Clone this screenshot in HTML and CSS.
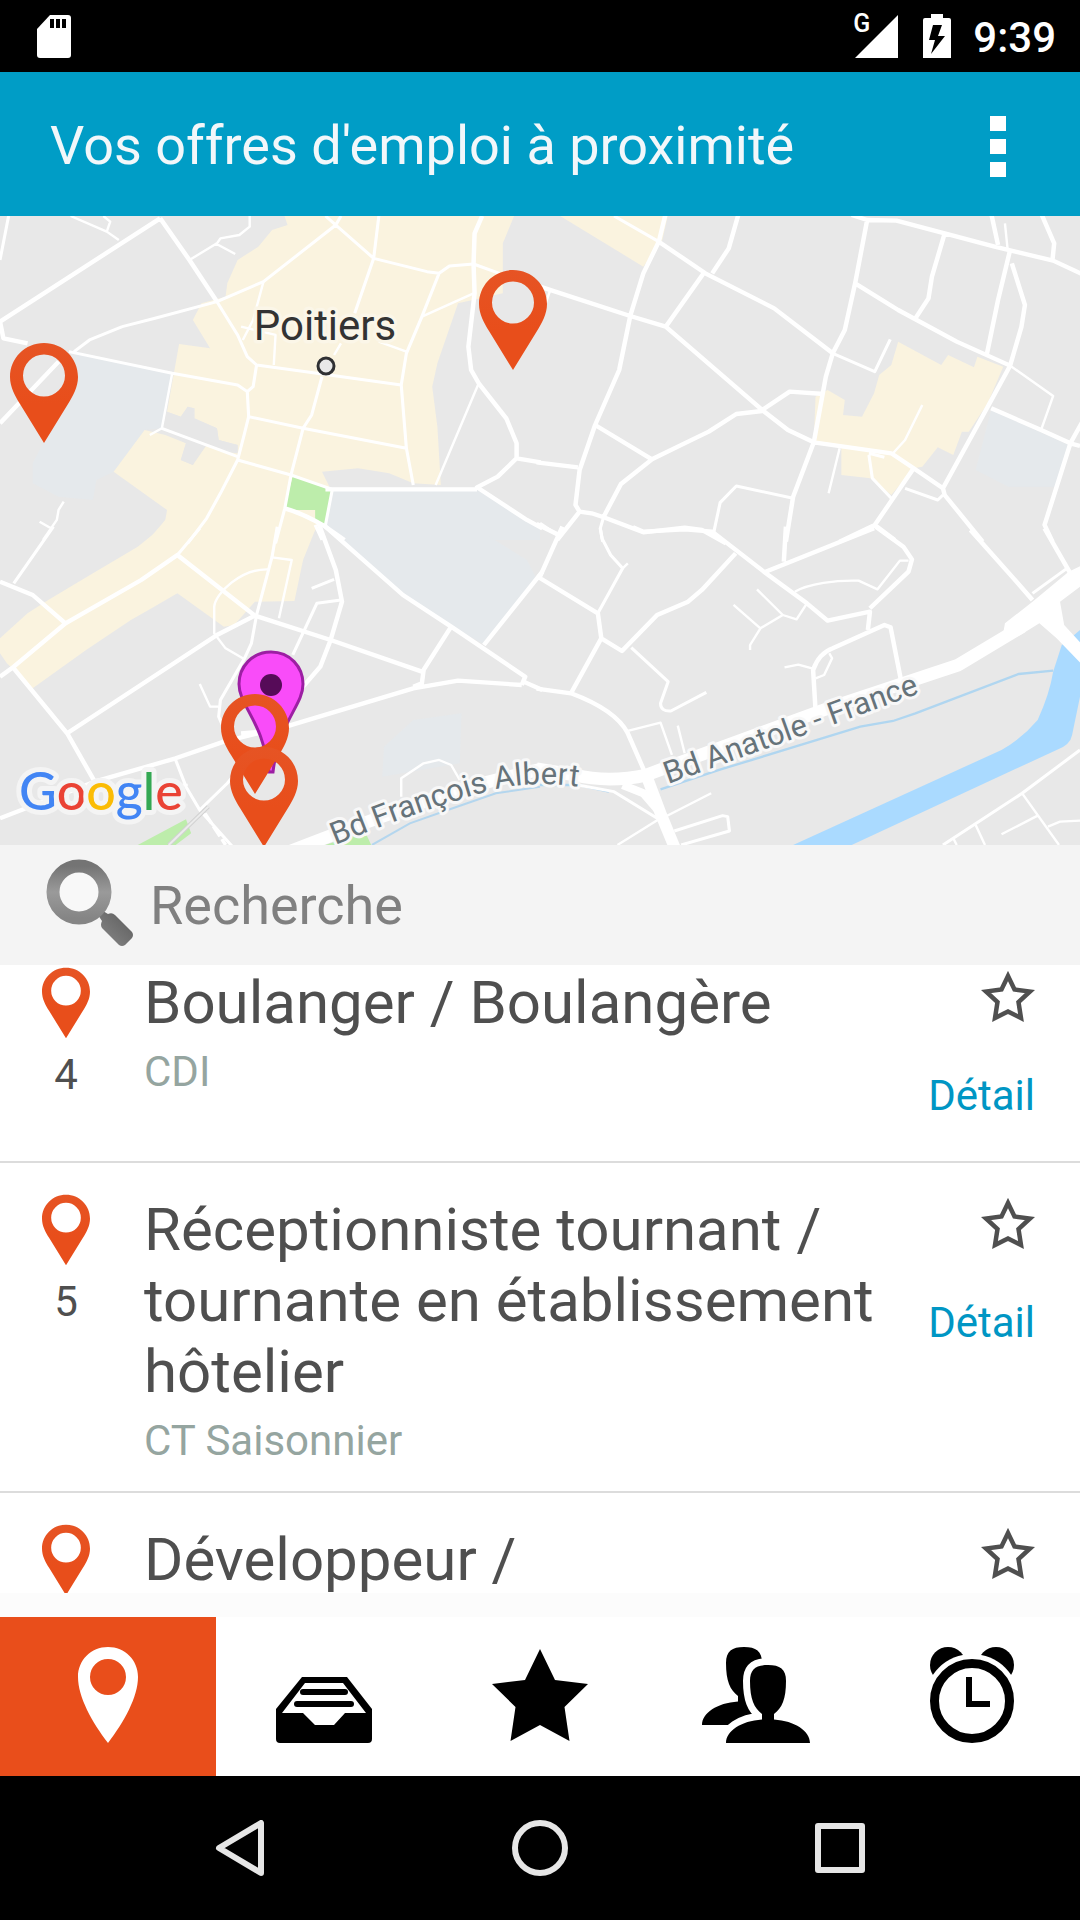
FILE: index.html
```html
<!DOCTYPE html>
<html lang="fr">
<head>
<meta charset="utf-8">
<meta name="viewport" content="width=device-width, initial-scale=1">
<title>Vos offres d'emploi à proximité</title>
<link rel="stylesheet" href="styles.css">
</head>
<body>
<svg class="defs" aria-hidden="true">
  <defs>
    <linearGradient id="pinFill" x1="0" y1="0" x2="0" y2="1"><stop offset="0" stop-color="#e65424"/><stop offset=".6" stop-color="#e84e1b"/></linearGradient>
    <linearGradient id="lens" x1="0" y1="0" x2="0" y2="1"><stop offset="0" stop-color="#747474"/><stop offset=".5" stop-color="#9a9a9a"/><stop offset="1" stop-color="#858585"/></linearGradient>
    <linearGradient id="handle" x1="0" y1="1" x2="1" y2="0"><stop offset="0" stop-color="#8a8a8a"/><stop offset="1" stop-color="#5a5a5a"/></linearGradient>
    <symbol id="pin" viewBox="0 0 68 100"><path fill="url(#pinFill)" fill-rule="evenodd" d="M34 0C15 0 0 15 0 34C0 44 5 53 10 61L34 100L58 61C63 53 68 44 68 34C68 15 53 0 34 0ZM34 11.500A21 21 0 1 1 34 53.500A21 21 0 1 1 34 11.500Z"/></symbol>
    <symbol id="star" viewBox="0 0 54 51"><path fill="none" stroke="#4f4f4f" stroke-width="4.500" d="M27 5L33.500 18.500L49 20.500L37.500 31L40 47L27 40.500L14 47L16.500 31L5 20.500L20.500 18.500Z"/></symbol>
  </defs>
</svg>

<div class="app">
  <div class="status">
    <svg width="34" height="43" viewBox="0 0 34 43" aria-hidden="true"><path fill="#fff" d="M13 0H31Q34 0 34 3V40Q34 43 31 43H3Q0 43 0 40V14Z"/><path d="M13 4h4v9h-4zM19 4h4v9h-4zM25 4h4v9h-4z"/></svg>
    <div class="status-right">
      <span class="network">G</span>
      <svg class="signal" width="43" height="43" viewBox="0 0 43 43" aria-hidden="true"><path fill="#fff" d="M43 0V43H0Z"/></svg>
      <svg class="battery" width="28" height="44" viewBox="0 0 28 44" aria-hidden="true"><path fill="#fff" d="M8 0H20V4H26Q28 4 28 6V44H0V6Q0 4 2 4H8Z"/><path d="M10 11H19L15 22H22L8 40L12 26H6Z"/></svg>
      <time class="clock">9:39</time>
    </div>
  </div>

  <header class="bar">
    <h1>Vos offres d'emploi à proximité</h1>
    <button class="more" type="button" aria-label="Menu"><i></i><i></i><i></i></button>
  </header>

  <svg class="map" viewBox="0 0 1080 629" role="img" aria-label="Carte de Poitiers">
    <rect width="1080" height="629" fill="#e8e8e8"/>

    <!-- ground areas, one group per tile -->
    <g transform="translate(0 -6) scale(.3444 .3333)">
      <path fill="#e5e9ec" d="M225 425L500 490L470 655L420 660L330 785L280 810L270 870L170 860L95 820V760L130 690ZM965 838H1385L1568 950V990H1000L945 945Z"/>
      <path fill="#faf3df" d="M820 0L835 45L790 60L750 110L690 150L660 220L655 260L585 280L560 330L610 415L520 402L485 605L525 620L545 590L565 595V625L630 655L635 690L690 705V730L640 725L600 705L575 730L560 765L525 750L540 700L480 675L420 660L330 785L485 900L480 930L430 990H895L930 940L960 838L935 785L1040 775L1130 790L1200 820L1280 825L1270 650L1255 530L1270 460L1330 280L1460 250V100L1500 0Z"/>
      <path fill="#e7e7e7" d="M485 605L525 620L545 590L560 595L562 625L630 655L635 690L690 705V725L600 705L560 765L525 750L540 700L470 655Z"/>
      <path fill="#bdedab" d="M850 797L962 838L945 943L827 892Z"/>
    </g>
    <g transform="translate(540 -6) scale(.3444 .3333)">
      <path fill="#e5e9ec" d="M1310 600L1535 705L1495 830H1360L1265 780Z"/>
      <path fill="#faf3df" d="M30 0H375L355 90L300 170ZM1040 395L1165 465L1185 435L1260 472L1270 440L1345 470L1300 580L1245 665H1225L1200 735L1155 712L1110 770L1085 775L1020 855L960 805L875 795V715L795 695L800 560L835 540L885 570L880 615L935 620L970 550L985 495L1020 465Z"/>
    </g>
    <g transform="translate(0 314) scale(.3444 .3333)">
      <path fill="#e5e9ec" d="M950 0H1390L1530 90L1555 140L1410 345L1310 290L1170 200ZM1115 650L1200 570L1340 550L1335 700L1110 740Z"/>
      <path fill="#faf3df" d="M460 0L400 50L270 130L140 210L80 250L0 325V370L20 400L95 475L250 360L380 270L440 235L515 190L650 290L680 285L740 215L855 213L880 90L915 0V-60H500Z"/>
      <path fill="#bdedab" d="M400 945L540 868L555 910L510 945ZM930 950L1060 905L1080 950Z"/>
      <path fill="none" stroke="#b4d6ee" stroke-width="6" d="M1080 945L1190 880L1300 840L1440 790L1568 770"/>
    </g>
    <g transform="translate(540 314) scale(.3444 .3333)">
      <path fill="#aadaff" d="M735 945L1340 660Q1400 625 1445 570Q1480 490 1490 425L1515 345L1545 320L1568 300V500L1545 615Q1540 645 1500 660L905 945Z"/>
      <path fill="none" stroke="#b0d6f0" stroke-width="7" d="M0 765L110 765L200 785M350 778L520 720L930 590L1025 573L1090 550L1390 432L1490 422"/>
    </g>

    <!-- streets -->
    <g class="roads" transform="translate(0 -6) scale(.3444 .3333)">
      <path class="r3" d="M0 335L465 25M0 335L10 385L80 400M465 25L550 150L630 275M0 640L170 455M1400 18L1378 70L1375 162L1378 250L1360 410L1368 480L1390 520L1470 625L1500 700V745L1445 800L1385 832L1530 930L1575 955M1500 745L1570 757M945 838H1385M827 895Q880 910 945 950L1000 990"/>
      <path class="r2" d="M25 18L0 150M630 275L690 375L718 440L745 465L920 490L1165 525M355 350L450 325L630 275L765 215L975 45L990 18M945 18L1085 145L1240 185L1275 190L1305 168L1375 162L1450 190M1100 18L1085 145L1030 310M200 425L500 490L690 525L718 545L735 530L745 465M718 545L722 620L710 670L690 750L640 850L600 925L545 1000M722 620L880 655L1180 715M935 500L905 615L880 655L845 795M690 750L845 795L965 838L945 945M845 795L827 895L800 1000M1275 190L1225 320L1180 430L1165 525L1180 715L1200 825M215 425L260 390L355 350M470 655L690 740M915 945L935 990"/>
      <path class="r1" d="M205 18L310 65L345 90M310 65L320 35L300 18M550 150L630 100L640 85L695 75L725 50V18M625 100L683 132M500 490L470 655L435 675M765 215L735 330L705 390M700 350L800 375L795 465M1225 320L1375 250M1100 395L1180 425M1390 520L1265 825M185 875L170 900L165 930L125 990M115 935L148 955M990 400L970 435"/>
    </g>
    <g class="roads" transform="translate(540 -6) scale(.3444 .3333)">
      <path class="r3" d="M365 10L345 95L300 190L262 318L230 480L160 645L115 780L103 885L115 905L50 990M345 95L480 190L680 295L850 430M577 10L548 115L500 190M475 190L365 350M0 230L262 318L365 350L645 600L720 660L795 697L1020 730L1085 775L1170 835L1175 855L1285 995M950 30L915 220L885 360L850 430L830 500L795 697L735 860L714 995M905 15L950 30L1035 32L1175 70L1320 110L1490 152L1575 193M1175 70L1138 200L1128 265L1090 325M915 220L1040 300L1210 395L1365 467M1310 10L1330 105M1455 10L1493 100L1488 150M1365 120L1330 270L1297 435M1370 160L1408 285L1398 350L1365 467L1300 590L1170 835M1310 595L1455 660L1540 700L1568 708M1575 635L1540 700L1465 945L1488 995M645 600L725 545L825 552M645 603L570 612L490 665L430 695L325 748L235 822L185 920M160 645L325 748M-10 757L110 772M115 905L150 910L185 922L300 967L420 953L470 960L540 1000M-10 942L55 975M1085 775L972 945L870 995M972 945L1030 990"/>
      <path class="r2" d="M215 18L345 95M850 430L972 485L1017 388M735 865L570 828L523 878L505 965M185 920L175 955L182 995M955 735L965 805L1020 865M1060 835L1155 870L1170 855M955 730L1000 742"/>
      <path class="r1" d="M1350 40L1358 120M1365 467L1490 558L1455 660M870 715L838 850M1025 730L1060 690L1110 585M0 330L30 240"/>
    </g>
    <g class="roads" transform="translate(0 314) scale(.3444 .3333)">
      <path class="r3" d="M0 155L95 195L190 280M0 440L40 410L190 280L410 150L515 75L740 257L960 330L1225 425M40 415L195 610L275 755M195 610L630 315L740 257M0 865L275 755L510 685L650 635L830 590L1200 475L1330 452L1515 465M945 -10L1170 195L1310 290L1525 440L1515 465M1520 455L1575 480M925 -20L975 120L993 215L960 330L930 410L880 470M1310 290L1230 420L1225 460L1200 470M1575 125L1405 345M700 610L760 605L780 660"/>
      <path class="r2" d="M155 -10L40 160M515 75L580 -5M990 210L920 220L850 375M905 175L970 148M805 -10L790 80L745 255L730 340L710 385L640 510L635 560L660 620M510 690L540 770L580 840L675 950M580 840L660 760L700 710"/>
      <path class="r1" d="M790 82L847 90L810 265M780 118C700 115 625 190 622 230V310L655 355L710 388M580 462L610 530H635M1165 800V745L1230 700L1275 690L1310 705L1335 750M525 765H545"/>
      <path stroke="#d2d2d2" stroke-width="12" d="M490 945L605 830"/><path stroke="#ececec" stroke-width="6" d="M490 945L605 830"/>
      <path stroke-width="10" stroke-dasharray="36 10" d="M595 850L655 945"/>
      <path stroke-width="38" d="M840 965Q1200 820 1400 760L1568 718"/>
    </g>
    <g class="roads" transform="translate(540 314) scale(.3444 .3333)">
      <path class="r3" d="M65 -10L0 140M-10 138L168 250L178 325L90 490M178 325L238 363L340 255L430 215L470 180L568 70M270 -8L300 5L420 -2L500 5L650 125L775 220L835 272L958 245L952 300M958 235L1070 125L1080 88L1055 50L975 -10M655 125L970 -5M714 -10L708 95M1250 0L1375 145L1430 210M1465 -5L1540 130M800 540L793 420Q810 370 850 355L1000 285L1018 292L1048 450M-10 476L90 490Q220 540 255 610L310 740"/>
      <path class="r2" d="M0 -20L50 15M175 -5L180 25L205 75L240 115L168 250M265 353L372 455L350 520Q350 545 380 543L483 487M1430 190L1530 115M345 868L215 785L110 765M1568 660L1400 790L1170 945M390 903L530 857L545 860L550 903L410 945"/>
      <path class="r1" d="M240 115L255 100M740 185C780 160 860 150 925 152L980 178L1045 92H1070M775 220L745 268L705 255L630 178M705 255L640 295L610 345V360M640 295L562 225M710 412L750 404L790 415M840 370L848 385L825 435L800 445M255 603L350 578L383 675M400 587L420 670M355 865L497 790M225 945L345 868M1400 790L1507 945M1265 885L1292 945M1445 857L1340 913M1475 890L1510 875L1568 872M1200 925L1210 945"/>
      <path stroke-width="38" d="M-10 716L100 735Q200 760 310 735L360 715L850 530L1215 405L1400 290"/>
      <path fill="#fff" stroke="none" d="M1350 280L1430 215L1535 125L1575 105V165L1510 215L1522 285L1575 345V405L1500 325L1450 280L1395 315L1340 340Z"/>
      <path stroke-width="24" d="M240 765L300 790L350 850"/>
      <path stroke-width="34" d="M310 740L350 850L392 955"/>
    </g>

    <circle cx="326" cy="150" r="8" fill="#e8e8e8" stroke="#2f3033" stroke-width="3"/>
    <text class="city" x="325" y="124" text-anchor="middle">Poitiers</text>
    <path id="albert" fill="none" d="M335 629Q420 594 489 575Q535 562 600 574"/>
    <path id="anatole" fill="none" d="M668 568L940 470"/>
    <text class="street"><textPath href="#albert">Bd François Albert</textPath></text>
    <text class="street"><textPath href="#anatole">Bd Anatole - France</textPath></text>

    <text class="brand" x="19" y="594"><tspan class="b">G</tspan><tspan class="r">o</tspan><tspan class="y">o</tspan><tspan class="b">g</tspan><tspan class="g">l</tspan><tspan class="r">e</tspan></text>

    <path fill="#f94cf9" stroke="#9c1fa3" stroke-width="3" d="M271 436C252 436 239 451 239 468C239 490 263 505 269 556H273C279 505 303 490 303 468C303 451 290 436 271 436Z"/>
    <circle cx="271" cy="469" r="11" fill="#560b58"/>
    <use href="#pin" x="10" y="127" width="68" height="100"/>
    <use href="#pin" x="479" y="54" width="68" height="100"/>
    <use href="#pin" x="221" y="478" width="68" height="100"/>
    <use href="#pin" x="230" y="531" width="68" height="100"/>
  </svg>

  <label class="search">
    <svg width="88" height="88" viewBox="0 0 88 88" aria-hidden="true"><path fill="url(#handle)" d="M52 56L57 52L62 55Q66 53 69 56L86 73Q88 76 86 79L79 86Q76 88 73 86L56 69Q54 66 56 62Z"/><circle cx="33" cy="33" r="26" fill="#f8f8f8" stroke="url(#lens)" stroke-width="13"/></svg>
    <input type="search" placeholder="Recherche" aria-label="Recherche">
  </label>

  <ul class="offers">
    <li class="offer">
      <div class="place"><svg width="48" height="72" aria-hidden="true"><use href="#pin"/></svg><span>4</span></div>
      <div class="info"><h2>Boulanger / Boulangère</h2><p>CDI</p></div>
      <div class="actions"><button type="button" aria-label="Favori"><svg width="54" height="51"><use href="#star"/></svg></button><a href="#detail-4">Détail</a></div>
    </li>
    <li class="offer">
      <div class="place"><svg width="48" height="72" aria-hidden="true"><use href="#pin"/></svg><span>5</span></div>
      <div class="info"><h2>Réceptionniste tournant / tournante en établissement hôtelier</h2><p>CT Saisonnier</p></div>
      <div class="actions"><button type="button" aria-label="Favori"><svg width="54" height="51"><use href="#star"/></svg></button><a href="#detail-5">Détail</a></div>
    </li>
    <li class="offer">
      <div class="place"><svg width="48" height="72" aria-hidden="true"><use href="#pin"/></svg></div>
      <div class="info"><h2>Développeur /</h2></div>
      <div class="actions"><button type="button" aria-label="Favori"><svg width="54" height="51"><use href="#star"/></svg></button></div>
    </li>
  </ul>

  <nav class="tabs" aria-label="Sections">
    <button class="tab active" type="button" aria-label="Carte"><svg viewBox="0 0 108 96"><path fill="#fff" fill-rule="evenodd" d="M54 0C37 0 24 13 24 30C24 50 38 75 54 96C70 75 84 50 84 30C84 13 71 0 54 0ZM54 12A18 18 0 1 1 54 48A18 18 0 1 1 54 12Z"/></svg></button>
    <button class="tab" type="button" aria-label="Offres"><svg viewBox="0 0 108 96"><path fill-rule="evenodd" d="M6 62L32 30H77L102 62V92Q102 96 98 96H10Q6 96 6 92ZM12 66H33L45 78H64L75 66H96L73 36H35Z"/><rect x="30" y="42" width="48" height="6" rx="3"/><rect x="24" y="54" width="60" height="6" rx="3"/></svg></button>
    <button class="tab" type="button" aria-label="Favoris"><svg viewBox="0 0 108 96"><path d="M54 2L69 33L102 37L78.500 60L83.500 94L54 78L24.500 94L29.500 60L6 37L39 33Z"/></svg></button>
    <button class="tab" type="button" aria-label="Contacts"><svg viewBox="0 0 108 96"><path d="M24 16C24 4 30 0 42 0S60 4 60 16C60 34 56 43 48 49V54.500C69 56 84 66 84 78H0C0 66 15 56 36 54.500V49C28 43 24 34 24 16Z"/><path stroke="#fff" stroke-width="14" d="M48 34C48 22 54 18 66 18S84 22 84 34C84 52 80 61 72 67V72.500C93 74 108 84 108 96V103H24V96C24 84 39 74 60 72.500V67C52 61 48 52 48 34Z"/><path d="M48 34C48 22 54 18 66 18S84 22 84 34C84 52 80 61 72 67V72.500C93 74 108 84 108 96H24C24 84 39 74 60 72.500V67C52 61 48 52 48 34Z"/></svg></button>
    <button class="tab" type="button" aria-label="Alertes"><svg viewBox="0 0 108 96"><circle cx="30" cy="18" r="18"/><circle cx="78" cy="18" r="18"/><circle cx="54" cy="54" r="47" fill="#fff"/><circle cx="54" cy="54" r="37.500" fill="#fff" stroke="#000" stroke-width="9"/><path fill="none" stroke="#000" stroke-width="6" d="M51 30V57H72"/></svg></button>
  </nav>

  <nav class="system" aria-label="Système">
    <button type="button" aria-label="Retour"><svg viewBox="0 0 56 56"><path d="M49 3V53L7 28Z"/></svg></button>
    <button type="button" aria-label="Accueil"><svg viewBox="0 0 56 56"><circle cx="28" cy="28" r="25"/></svg></button>
    <button type="button" aria-label="Applications"><svg viewBox="0 0 56 56"><rect x="6" y="6" width="44" height="44"/></svg></button>
  </nav>
</div>
</body>
</html>
```
FILE: styles.css
```css
* { box-sizing: border-box; }

body {
  margin: 0;
  font-family: Roboto, "Liberation Sans", sans-serif;
  color: #4f4f4f;
  background: #fff;
}

button {
  margin: 0;
  padding: 0;
  border: 0;
  background: none;
  font: inherit;
  color: inherit;
}

h1, h2, p, ul { margin: 0; padding: 0; font-weight: 400; }

svg { display: block; }

.defs { position: absolute; width: 0; height: 0; }

.app {
  display: flex;
  flex-direction: column;
  height: 100vh;
}

.app > * { flex: none; }

/* status bar */
.status {
  display: flex;
  justify-content: space-between;
  align-items: center;
  height: 72px;
  padding: 0 24px 0 37px;
  background: #000;
  color: #fff;
}

.status-right { display: flex; align-items: center; }
.network { align-self: flex-start; padding-top: 4px; font-size: 25px; line-height: 20px; font-weight: 500; width: 16px; margin-right: -14px; }
.battery { margin: 0 22px 0 25px; }
.clock { padding-top: 4px; font-size: 42px; line-height: 48px; font-weight: 500; }

/* title bar */
.bar {
  display: flex;
  justify-content: space-between;
  align-items: center;
  height: 144px;
  padding: 4px 74px 0 50px;
  background: #009dc6;
  color: #f2f7fa;
}

.bar h1 { font-size: 54px; line-height: 64px; }
.more { display: grid; gap: 8px; }
.more i { width: 16px; height: 15px; background: #fff; }

/* map */
.map { width: 100%; height: auto; overflow: hidden; }
.roads { fill: none; stroke: #fff; stroke-linejoin: round; }
.r3 { stroke-width: 13px; }
.r2 { stroke-width: 9px; }
.r1 { stroke-width: 7px; }

.city, .street {
  paint-order: stroke;
  stroke: #f8f8f8;
  stroke-linejoin: round;
}
.city { font-size: 42px; fill: #333; stroke: #fbf6e8; stroke-width: 7px; }
.street { font-size: 31px; fill: #66737a; stroke-width: 6px; }

.brand {
  font-family: Lato, sans-serif;
  font-size: 52px;
  font-weight: 500;
  paint-order: stroke;
  stroke: #f4f4f4;
  stroke-width: 10px;
  stroke-linejoin: round;
}
.brand .b { fill: #4285f4; }
.brand .r { fill: #ea4335; }
.brand .y { fill: #fbbc05; }
.brand .g { fill: #34a853; }

/* search */
.search {
  display: flex;
  align-items: center;
  height: 120px;
  padding: 2px 46px 0;
  gap: 16px;
  background: #f4f4f4;
}

.search svg { margin-bottom: 6px; }

.search input {
  flex: 1;
  min-width: 0;
  padding: 0;
  border: 0;
  outline: 0;
  background: none;
  font: 400 54px/64px Roboto, sans-serif;
  color: #4f4f4f;
}
.search input::placeholder { color: #808080; opacity: 1; }

/* offers */
.app > .offers {
  flex: 1 1 0;
  min-height: 0;
  overflow: hidden;
  list-style: none;
}

.offer {
  display: flex;
  padding: 31px 45px 26px 12px;
  border-bottom: 2px solid #dcdcdc;
}
.offer:first-child { padding-top: 2px; }

.place {
  display: flex;
  flex-direction: column;
  align-items: center;
  gap: 11px;
  width: 108px;
  font-size: 42px;
  line-height: 49px;
}

.info { flex: 1; margin-left: 24px; }
.info h2 { font-size: 60px; line-height: 71px; }
.info p { margin-top: 9px; font-size: 42px; line-height: 49px; color: #95a5a0; }

.actions {
  display: flex;
  flex-direction: column;
  align-items: flex-end;
  gap: 49px;
  padding: 4px 0 15px;
}
.actions a { font-size: 42px; line-height: 49px; color: #0096c4; text-decoration: none; }

/* section tabs */
.tabs {
  display: grid;
  grid-template-columns: repeat(5, 1fr);
  height: 183px;
  border-top: 24px solid #fcfcfc;
}
.tab { display: grid; place-items: center; padding-bottom: 4px; }
.tab svg { width: 108px; height: 96px; }
.active { background: #e94e1b; }

/* system buttons */
.system {
  display: grid;
  grid-template-columns: repeat(3, 1fr);
  height: 144px;
  padding: 0 90px;
  background: #000;
}
.system button { display: grid; place-items: center; }
.system svg {
  width: 56px;
  height: 56px;
  fill: none;
  stroke: #e6e6e6;
  stroke-width: 6px;
  stroke-linejoin: round;
}
```
